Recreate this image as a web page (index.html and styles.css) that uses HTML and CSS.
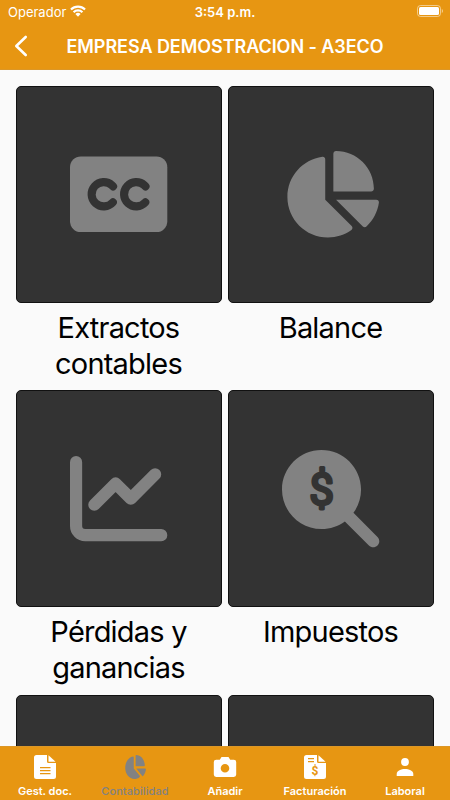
FILE: index.html
```html
<!DOCTYPE html>
<html lang="es">

<head>
    <meta charset="UTF-8">
    <meta name="viewport" content="width=device-width, initial-scale=1.0">
    <title>Contabilidad</title>
    <link rel="stylesheet" href="styles.css">
</head>

<body>
    <header>
        <div class="status-bar">
            <div class="carrier">
                <span>Operador</span>
                <svg class="wifi" viewBox="0 0 16 12">
                    <path d="M0.2 3.7a11.2 11.2 0 0 1 15.6 0l-1.5 1.6a9 9 0 0 0-12.6 0z" />
                    <path d="M2.8 6.4a7.5 7.5 0 0 1 10.4 0l-1.6 1.6a5.2 5.2 0 0 0-7.2 0z" />
                    <path d="M5.4 9a3.8 3.8 0 0 1 5.2 0L8 11.8z" />
                </svg>
            </div>
            <div class="time">3:54 p.m.</div>
            <div class="battery">
                <svg viewBox="0 0 27 12">
                    <rect x="0.5" y="0.5" width="23" height="11" rx="3" fill="none" stroke="#fff" stroke-opacity="0.5" />
                    <rect x="2" y="2" width="20" height="8" rx="1.5" />
                    <path d="M24.8 4v4a2.2 2.2 0 0 0 0-4z" opacity="0.5" />
                </svg>
            </div>
        </div>
        <div class="nav-bar">
            <svg class="back" viewBox="0 0 14 22">
                <path d="M11.7 2L2.3 11l9.4 9" />
            </svg>
            <h1>EMPRESA DEMOSTRACION - A3ECO</h1>
        </div>
    </header>

    <main>
        <div class="item">
            <div class="card">
                <svg class="icon" viewBox="0 0 576 512">
                    <rect y="32" width="576" height="448" rx="64" />
                    <circle class="ring" cx="200" cy="256" r="72" transform="rotate(42 200 256)" />
                    <circle class="ring" cx="392" cy="256" r="72" transform="rotate(42 392 256)" />
                </svg>
            </div>
            <div class="label">Extractos contables</div>
        </div>
        <div class="item">
            <div class="card">
                <svg class="icon" viewBox="0 0 576 512">
                    <path id="pie" d="M304 240V16.6c0-9 7-16.6 16-16.6C443.7 0 544 100.3 544 224c0 9-7.6 16-16.6 16H304zM32 272C32 150.7 122.1 50.3 239 34.3c9.2-1.3 17 6.1 17 15.4V288L412.5 444.5c6.7 6.7 6.2 17.7-1.5 23.1C371.8 495.6 323.8 512 272 512C139.5 512 32 404.6 32 272zm526.4 16c9.3 0 16.6 7.8 15.4 17c-7.7 55.9-34.6 105.6-73.9 142.3c-6 5.6-15.4 5.2-21.2-.7L320 288H558.4z" />
                </svg>
            </div>
            <div class="label">Balance</div>
        </div>
        <div class="item">
            <div class="card">
                <svg class="icon line" viewBox="0 0 512 512">
                    <path d="M32 64V400a48 48 0 0 0 48 48H480" />
                    <path d="M128 288L240 176L320 256L448 128" />
                </svg>
            </div>
            <div class="label">Pérdidas y ganancias</div>
        </div>
        <div class="item">
            <div class="card">
                <svg class="icon" viewBox="0 0 512 512">
                    <path d="M416 208c0 45.9-14.9 88.3-40 122.7L502.6 457.4c12.5 12.5 12.5 32.8 0 45.3s-32.8 12.5-45.3 0L330.7 376c-34.4 25.2-76.8 40-122.7 40C93.1 416 0 322.9 0 208S93.1 0 208 0S416 93.1 416 208z" />
                    <text class="dollar" x="208" y="287">$</text>
                </svg>
            </div>
            <div class="label">Impuestos</div>
        </div>
        <div class="item">
            <div class="card"></div>
        </div>
        <div class="item">
            <div class="card"></div>
        </div>
    </main>

    <nav class="tab-bar">
        <a class="tab">
            <svg viewBox="0 0 24 24">
                <path fill-rule="evenodd" d="M3.5 0H14v6.5a1.5 1.5 0 0 0 1.5 1.5H23v13.5a2.5 2.5 0 0 1-2.5 2.5h-17A2.5 2.5 0 0 1 1 21.5v-19A2.5 2.5 0 0 1 3.5 0zM7 12v1.2h10.5V12zM7 15v1.2h10.5V15zM7 18v1.2h10.5V18z" />
                <path d="M15.5 0.3L22.6 6.7H15.5z" />
            </svg>
            <span>Gest. doc.</span>
        </a>
        <a class="tab active">
            <svg class="pie" viewBox="0 0 576 512" preserveAspectRatio="none">
                <use href="#pie" />
            </svg>
            <span>Contabilidad</span>
        </a>
        <a class="tab">
            <svg viewBox="0 0 24 24">
                <path fill-rule="evenodd" d="M8.5 2h7l1.7 2.7h3.6a2.4 2.4 0 0 1 2.4 2.4v12.5a2.4 2.4 0 0 1-2.4 2.4H3.2a2.4 2.4 0 0 1-2.4-2.4V7.1a2.4 2.4 0 0 1 2.4-2.4h3.6zM12 9a4.3 4.3 0 1 0 0 8.6A4.3 4.3 0 1 0 12 9z" />
            </svg>
            <span>Añadir</span>
        </a>
        <a class="tab">
            <svg viewBox="0 0 24 24">
                <path fill-rule="evenodd" d="M3.5 0H14v6.5a1.5 1.5 0 0 0 1.5 1.5H23v13.5a2.5 2.5 0 0 1-2.5 2.5h-17A2.5 2.5 0 0 1 1 21.5v-19A2.5 2.5 0 0 1 3.5 0zM5 3v1.2h6V3zM5 6v1.2h6V6z" />
                <path d="M15.5 0.3L22.6 6.7H15.5z" />
                <text class="invoice" x="12" y="20">$</text>
            </svg>
            <span>Facturación</span>
        </a>
        <a class="tab">
            <svg viewBox="0 0 24 24">
                <circle cx="12" cy="7" r="3.9" />
                <path d="M3.7 21v-2c0-3.4 4.5-5 8.3-5s8.3 1.6 8.3 5v2z" />
            </svg>
            <span>Laboral</span>
        </a>
    </nav>
</body>

</html>
```

FILE: styles.css
```css
body {
    margin: 0;
    height: 100vh;
    display: flex;
    flex-direction: column;
    overflow: hidden;
    font-family: Inter, "Liberation Sans", sans-serif;
    background-color: #fafafa;
    color: #000;
}

svg {
    display: block;
    fill: currentColor;
}

header {
    flex: none;
    height: 70px;
    box-sizing: border-box;
    background-color: #e79612;
    border-bottom: 1px solid #dc9727;
    color: #fff;
}

.status-bar {
    display: grid;
    grid-template-columns: 1fr auto 1fr;
    align-items: center;
    height: 23px;
    padding: 0 6px 0 8px;
    font-size: 13px;
}

.carrier {
    display: flex;
    align-items: center;
    gap: 4px;
}

.wifi {
    width: 16px;
    height: 12px;
    margin-top: -1px;
}

.time {
    margin-right: 2px;
    font-weight: 600;
}

.battery svg {
    width: 27px;
    height: 12px;
    margin-left: auto;
    margin-top: -1px;
}

.nav-bar {
    display: grid;
    grid-template-columns: 28px 1fr 28px;
    align-items: center;
    height: 46px;
    padding-left: 14px;
    padding-right: 14px;
}

.back {
    width: 14px;
    height: 22px;
    fill: none;
    stroke: #fff;
    stroke-width: 2.6;
    stroke-linecap: round;
    stroke-linejoin: round;
}

h1 {
    margin: 0;
    font-size: 18px;
    font-weight: 600;
    letter-spacing: -0.06px;
    text-align: center;
    white-space: nowrap;
}

main {
    flex: 1;
    min-height: 0;
    overflow: hidden;
    display: grid;
    grid-template-columns: 206px 206px;
    grid-auto-rows: 304.4px;
    column-gap: 6px;
    padding: 16px 16px 0;
}

.card {
    display: flex;
    align-items: center;
    justify-content: center;
    height: 217px;
    box-sizing: border-box;
    border: 1px solid #111;
    border-radius: 5px;
    background-color: #333;
}

.icon {
    width: 97.3px;
    color: #828282;
}

.line {
    fill: none;
    stroke: #828282;
    stroke-width: 64;
    stroke-linecap: round;
    stroke-linejoin: round;
}

/* open ring, gap faces right */
.ring {
    fill: none;
    stroke: #333;
    stroke-width: 48;
    stroke-linecap: round;
    stroke-dasharray: 347 106;
}

.dollar {
    fill: #333;
    stroke: #333;
    stroke-width: 15px;
    stroke-linejoin: round;
    font-family: Roboto, sans-serif;
    font-size: 232px;
    text-anchor: middle;
}

.label {
    padding: 7px 21px 0 20px;
    font-size: 29px;
    letter-spacing: -0.8px;
    line-height: 36px;
    text-align: center;
}

.tab-bar {
    flex: none;
    display: grid;
    grid-template-columns: repeat(5, 1fr);
    height: 54px;
    box-sizing: border-box;
    border-top: 1px solid #dc9727;
    background-color: #e79612;
}

.tab {
    display: flex;
    flex-direction: column;
    align-items: center;
    padding-top: 8px;
    color: #fff;
    font-size: 11px;
    font-weight: 600;
}

.tab svg {
    width: 24px;
    height: 24px;
}

.tab .pie {
    width: 22px;
}

.tab span {
    margin-top: 6px;
    line-height: 13px;
}

.tab.active {
    color: #828282;
    font-weight: 500;
    letter-spacing: 0.1px;
}

.invoice {
    fill: #e79612;
    font-family: Roboto, sans-serif;
    font-size: 12px;
    font-weight: 700;
    text-anchor: middle;
}
```
